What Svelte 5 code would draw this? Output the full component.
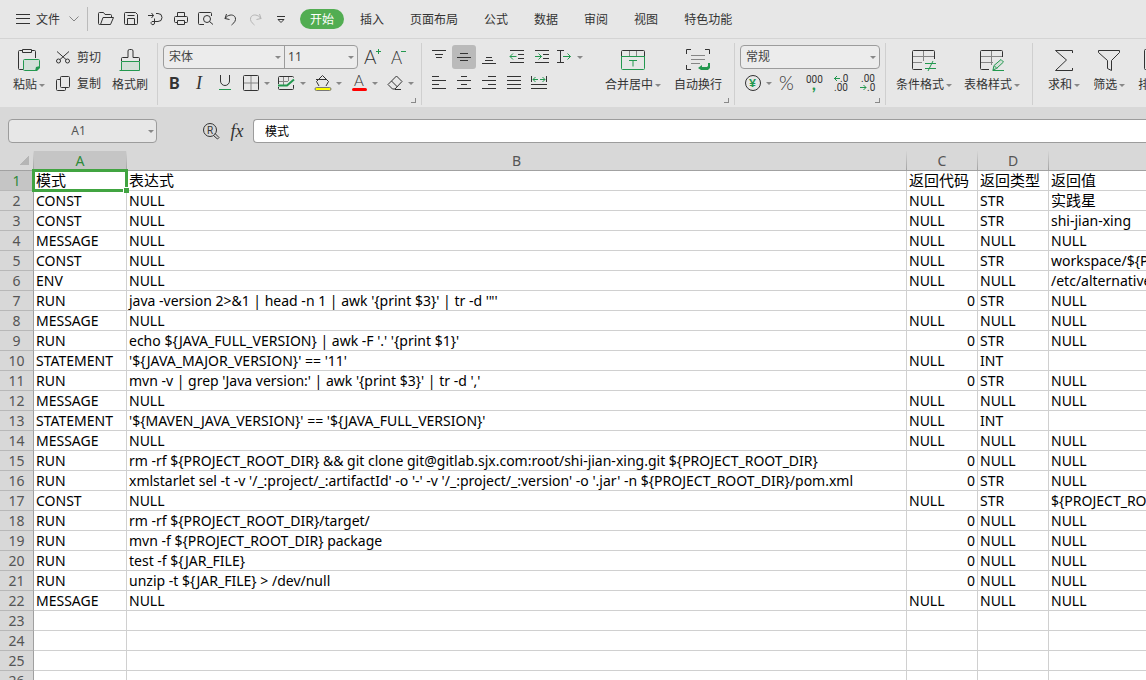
<script lang="ts">
  type Icon = { w: number; h: number; p?: string[][]; t?: any[][] };

  // p: [class, path], t: [class, x, y, size, text]
  const icons: Record<string, Icon> = {
    menu: { w: 14, h: 10, p: [['k', 'M0 .5h14M0 4.5h14M0 9.5h14']] },
    down: { w: 10, h: 6, p: [['s', 'M.5 .5L5 5l4.5-4.5']] },
    open: { w: 16, h: 14, p: [['k', 'M2.5 12.5h-1a1 1 0 0 1-1-1v-10a1 1 0 0 1 1-1h4l1.5 2h5.5a1 1 0 0 1 1 1v2M2.5 12.5h10l3-7H5z']] },
    save: { w: 14, h: 14, p: [['k', 'M1.5 .5h10l2 2v9a1 1 0 0 1-1 1h-11a1 1 0 0 1-1-1v-10a1 1 0 0 1 1-1M3.5 12.5v-6h7v6M3.5 3.5h7']] },
    output: { w: 15, h: 14, p: [['k', 'M0 3.5h5.5M3.5 1l2 2.5-2 2.5M8 1.5h2a4 4 0 0 1 0 8H4a1.7 1.7 0 1 0 2.5 1.5V6.5']] },
    print: { w: 14, h: 14, p: [['k', 'M3.5 4.5V.5h7v4M3.5 10.5h-2a1 1 0 0 1-1-1v-4a1 1 0 0 1 1-1h11a1 1 0 0 1 1 1v4a1 1 0 0 1-1 1h-2M3.5 8.5h7v4h-7z']] },
    preview: { w: 16, h: 14, p: [['k', 'M6 12.5H1.5a1 1 0 0 1-1-1v-10a1 1 0 0 1 1-1h11a1 1 0 0 1 1 1V4M12.5 7a3.5 3.5 0 1 1-7 0a3.5 3.5 0 0 1 7 0M11.5 9.5l3.5 3']] },
    undo: { w: 13, h: 13, p: [['k', 'M2.5 1L1 5.5l4.5 1M1 5.5C5 0 12 1.5 11.5 6.5c-.5 3-2.5 4-4 5.5']] },
    redo: { w: 13, h: 13, p: [['l', 'M10.5 1L12 5.5l-4.5 1M12 5.5C8 0 1 1.5 1.5 6.5c.5 3 2.5 4 4 5.5']] },
    more: { w: 8, h: 7, p: [['k', 'M0 .5h8M1 3.5h6L4 6.5z']] },
    paste: { w: 22, h: 22, p: [
      ['k', 'M4.5 1.5h-3a1 1 0 0 0-1 1v17a1 1 0 0 0 1 1H5M14 1.5h2.5a1 1 0 0 1 1 1V9M4.5 .5h9v3h-9z'],
      ['gt', 'M6.5 10.5h14a1 1 0 0 1 1 1v6l-4 4h-11a1 1 0 0 1-1-1v-9a1 1 0 0 1 1-1'],
      ['gf', 'M22 17v2l-3 3h-2l1-4z']] },
    cut: { w: 14, h: 13, p: [['k', 'M1 .5l9 8M13 .5l-9 8M4.5 10a2 2 0 1 1-4 0a2 2 0 0 1 4 0M13.5 10a2 2 0 1 1-4 0a2 2 0 0 1 4 0']] },
    copy: { w: 14, h: 15, p: [['k', 'M5.5 .5h7a1 1 0 0 1 1 1v9a1 1 0 0 1-1 1h-7a1 1 0 0 1-1-1v-9a1 1 0 0 1 1-1M4.5 3.5h-3a1 1 0 0 0-1 1v9a1 1 0 0 0 1 1h7a1 1 0 0 0 1-1v-2']] },
    brush: { w: 22, h: 22, p: [
      ['gt', 'M2.5 12.5h18v9h-18z'], ['g', 'M.5 21.5h3'],
      ['k', 'M2.5 12V9.5a1 1 0 0 1 1-1H9V2a1.5 1.5 0 0 1 1.5-1.5h2A1.5 1.5 0 0 1 14 2v6.5h5.5a1 1 0 0 1 1 1V12']] },
    grow: { w: 18, h: 16, t: [['kt', 0, 15, 19, 'A']], p: [['g', 'M14.5 0v5M12 2.5h5']] },
    shrink: { w: 16, h: 16, t: [['kt', 1, 15, 17, 'A']], p: [['g', 'M11 2.5h5']] },
    bold: { w: 12, h: 14, t: [['kt b', 0, 13, 16, 'B']] },
    italic: { w: 10, h: 14, t: [['kt i', 1, 13, 18, 'I']] },
    under: { w: 14, h: 16, p: [['k', 'M2.5 0v6a4.5 4.5 0 0 0 9 0V0'], ['g', 'M1 14.5h12']] },
    border: { w: 16, h: 16, p: [['s', 'M8 1v14M1 8h14'], ['k', 'M1.5 .5h13a1 1 0 0 1 1 1v13a1 1 0 0 1-1 1h-13a1 1 0 0 1-1-1v-13a1 1 0 0 1 1-1']] },
    draw: { w: 18, h: 16, p: [['s', 'M1 6.5h9M5.5 2v8M10.5 2v4'], ['k', 'M.5 9V2.5a1 1 0 0 1 1-1h13a1 1 0 0 1 1 1M.5 12v1.5a1 1 0 0 0 1 1h13a1 1 0 0 0 1-1V10'], ['g2', 'M0 10.5h9l7-6']] },
    fill: { w: 18, h: 16, p: [['k', 'M2 4.5h11M8.5 .5l6 6-2.5 4.5M8.5 .5L2.5 6.5 5 11'], ['yel', 'M2.5 12.5h13a1 1 0 0 1 0 3h-13a1 1 0 0 1 0-3z']] },
    color: { w: 16, h: 16, t: [['kt', 3, 11, 15, 'A']], p: [['red', 'M2.5 14.5h12']] },
    eraser: { w: 16, h: 16, p: [['k', 'M9.5 1l5.5 5.5-7 7.5H5.5L1 9.5zM4.5 6l6 6M8 14.5h6']] },
    atop: { w: 14, h: 14, p: [['k', 'M0 .5h14M3 4.5h8M4 7.5h6']] },
    amid: { w: 14, h: 14, p: [['k', 'M3 3.5h8M0 7.5h14M3 10.5h8']] },
    abot: { w: 14, h: 14, p: [['k', 'M4 7.5h6M3 10.5h8M0 13.5h14']] },
    dedent: { w: 14, h: 14, p: [['k', 'M0 .5h14M8 4.5h6M8 8.5h6M0 12.5h14'], ['g', 'M0 6.5h6.5M3 3.5l-3 3 3 3']] },
    indent: { w: 14, h: 14, p: [['k', 'M0 .5h14M8 4.5h6M8 8.5h6M0 12.5h14'], ['g', 'M0 6.5h6.5M3.5 3.5l3 3-3 3']] },
    orient: { w: 15, h: 14, p: [['k', 'M0 .5h7M3.5 .5v12M0 12.5h7'], ['g', 'M6 6.5h7.5M10.5 3.5l3 3-3 3']] },
    left: { w: 14, h: 14, p: [['k', 'M0 .5h7M0 4.5h14M0 8.5h7M0 12.5h14']] },
    center: { w: 14, h: 14, p: [['k', 'M4 .5h6M0 4.5h14M4 8.5h6M0 12.5h14']] },
    right: { w: 14, h: 14, p: [['k', 'M6 .5h8M0 4.5h14M6 8.5h8M0 12.5h14']] },
    justify: { w: 14, h: 14, p: [['k', 'M0 .5h14M0 4.5h14M0 8.5h14M0 12.5h14']] },
    spread: { w: 16, h: 14, p: [['k', 'M.5 0v6M15.5 0v6M0 8.5h16M0 12.5h16'], ['g', 'M2 3.5h5M9 3.5h5M4.5 1L2 3.5 4.5 6M11.5 1L14 3.5 11.5 6']] },
    merge: { w: 24, h: 20, p: [['s', 'M8.5 1v5M15.5 1v5'], ['g', 'M.5 6v12.5a1 1 0 0 0 1 1h21a1 1 0 0 0 1-1V6M.5 6.5h23M8 10.5h8M12 10.5v6'], ['k', 'M.5 6V1.5a1 1 0 0 1 1-1h21a1 1 0 0 1 1 1V6']] },
    wrap: { w: 24, h: 22, p: [['s', 'M5 6.5h14M5 10.5h14M5 14.5h9'], ['k', 'M.5 5V.5H5M19 .5h4.5V5M.5 16v4.5H5'], ['gf', 'M22 14h2v5l-2 2h-7l-3-2 4-3v2h5l1-1z']] },
    money: { w: 16, h: 16, p: [['k', 'M15.5 8a7.5 7.5 0 1 1-15 0a7.5 7.5 0 0 1 15 0']], t: [['gx b', 4, 12, 12, '¥']] },
    percent: { w: 16, h: 16, t: [['kt', 0, 15, 19, '%']] },
    comma: { w: 16, h: 17, t: [['kt m', 0, 8, 10, '000'], ['gx b', 6, 15, 16, ',']] },
    more0: { w: 16, h: 18, p: [['g', 'M1 4.5h6M4 2L1.5 4.5 4 7']], t: [['kt m', 7, 8, 10, '.0'], ['kt m', 1, 17, 10, '.00']] },
    less0: { w: 16, h: 18, p: [['g', 'M0 13.5h6M3.5 11L6 13.5 3.5 16']], t: [['kt m', 1, 8, 10, '.00'], ['kt m', 7, 17, 10, '.0']] },
    cond: { w: 24, h: 22, p: [['s', 'M1 7.5h21M11.5 2v10M1 13.5h9'], ['k', 'M22.5 10V2.5a1 1 0 0 0-1-1h-20a1 1 0 0 0-1 1v17a1 1 0 0 0 1 1H10'], ['g', 'M13 14.5h11M13 19.5h11M21 12l-5 10']] },
    style: { w: 24, h: 22, p: [['s', 'M1 7.5h21M11.5 2v14M1 13.5h12'], ['k', 'M22.5 8V2.5a1 1 0 0 0-1-1h-20a1 1 0 0 0-1 1v17a1 1 0 0 0 1 1H9'], ['gt', 'M13 21l1-4.5 7-6 2.5 2.5-7 6.5z'], ['g', 'M12.5 21.5H24M14.5 17l2.5 2.5']] },
    sum: { w: 18, h: 22, p: [['k', 'M17.5 4V1.5H.5l11 9.5L.5 21.5h17V19']] },
    filter: { w: 22, h: 22, p: [['k', 'M.5 1.5h21v2l-8 8v10l-4-2v-8l-9-8z']] },
    sort: { w: 20, h: 22, p: [['k', 'M9 .5H1.5a1 1 0 0 0-1 1v18a1 1 0 0 0 1 1H9z']] },
    search: { w: 17, h: 17, p: [['k', 'M13.5 7a6.5 6.5 0 1 1-13 0a6.5 6.5 0 0 1 13 0M10.5 12.5l4 3.5 1.5-1.5-4-4']], t: [['kt m', 4, 11, 10, 'R']] }
  };

  const quick = [
    ['open', '打开'], ['save', '保存'], ['output', '输出'], ['print', '打印'],
    ['preview', '打印预览'], ['undo', '撤销'], ['redo', '恢复'], ['more', '自定义']
  ];
  const tabs = ['开始', '插入', '页面布局', '公式', '数据', '审阅', '视图', '特色功能'];
  let activeTab = $state('开始');
  let formula = $state('模式');

  const columns = ['A', 'B', 'C', 'D', 'E'];
  const rows = [
    ['模式', '表达式', '返回代码', '返回类型', '返回值'],
    ['CONST', 'NULL', 'NULL', 'STR', '实践星'],
    ['CONST', 'NULL', 'NULL', 'STR', 'shi-jian-xing'],
    ['MESSAGE', 'NULL', 'NULL', 'NULL', 'NULL'],
    ['CONST', 'NULL', 'NULL', 'STR', 'workspace/${PROJECT_NAME}'],
    ['ENV', 'NULL', 'NULL', 'NULL', '/etc/alternatives'],
    ['RUN', `java -version 2>&1 | head -n 1 | awk '{print $3}' | tr -d '"'`, 0, 'STR', 'NULL'],
    ['MESSAGE', 'NULL', 'NULL', 'NULL', 'NULL'],
    ['RUN', "echo ${JAVA_FULL_VERSION} | awk -F '.' '{print $1}'", 0, 'STR', 'NULL'],
    ['STATEMENT', "'${JAVA_MAJOR_VERSION}' == '11'", 'NULL', 'INT', ''],
    ['RUN', "mvn -v | grep 'Java version:' | awk '{print $3}' | tr -d ','", 0, 'STR', 'NULL'],
    ['MESSAGE', 'NULL', 'NULL', 'NULL', 'NULL'],
    ['STATEMENT', "'${MAVEN_JAVA_VERSION}' == '${JAVA_FULL_VERSION}'", 'NULL', 'INT', ''],
    ['MESSAGE', 'NULL', 'NULL', 'NULL', 'NULL'],
    ['RUN', 'rm -rf ${PROJECT_ROOT_DIR} && git clone git@gitlab.sjx.com:root/shi-jian-xing.git ${PROJECT_ROOT_DIR}', 0, 'NULL', 'NULL'],
    ['RUN', "xmlstarlet sel -t -v '/_:project/_:artifactId' -o '-' -v '/_:project/_:version' -o '.jar' -n ${PROJECT_ROOT_DIR}/pom.xml", 0, 'STR', 'NULL'],
    ['CONST', 'NULL', 'NULL', 'STR', '${PROJECT_ROOT_DIR}'],
    ['RUN', 'rm -rf ${PROJECT_ROOT_DIR}/target/', 0, 'NULL', 'NULL'],
    ['RUN', 'mvn -f ${PROJECT_ROOT_DIR} package', 0, 'NULL', 'NULL'],
    ['RUN', 'test -f ${JAR_FILE}', 0, 'NULL', 'NULL'],
    ['RUN', 'unzip -t ${JAR_FILE} > /dev/null', 0, 'NULL', 'NULL'],
    ['MESSAGE', 'NULL', 'NULL', 'NULL', 'NULL'],
    ...Array.from({ length: 8 }, () => ['', '', '', '', ''])
  ];

  const isChinese = (cell: string | number) => /[\u4e00-\u9fff]/.test(String(cell));
</script>

{#snippet icon(name: string)}
  {@const ic = icons[name]}
  <svg width={ic.w} height={ic.h} viewBox="0 0 {ic.w} {ic.h}" aria-hidden="true">
    {#each ic.p ?? [] as [cls, d]}
      <path class={cls} {d} />
    {/each}
    {#each ic.t ?? [] as [cls, x, y, size, text]}
      <text class={cls} {x} {y} font-size={size}>{text}</text>
    {/each}
  </svg>
{/snippet}

{#snippet tool(name: string, title: string, on = false)}
  <button class="tool" class:on aria-label={title}>{@render icon(name)}</button>
{/snippet}

{#snippet drop(name: string, title: string)}
  <button class="drop" aria-label={title}>
    <span class="pic">{@render icon(name)}</span><i class="caret"></i>
  </button>
{/snippet}

{#snippet large(name: string, label: string, caret = true)}
  <button class="large">
    <span class="big">{@render icon(name)}</span>
    <span class="label">{label}{#if caret}<i class="caret"></i>{/if}</span>
  </button>
{/snippet}

<div class="app">
  <header class="menubar">
    <button class="file">{@render icon('menu')}<span>文件</span>{@render icon('down')}</button>
    <div class="quick">
      {#each quick as [name, title]}
        <button aria-label={title}>{@render icon(name)}</button>
      {/each}
    </div>
    <nav class="tabs">
      {#each tabs as tab}
        <button class:active={activeTab === tab} onclick={() => (activeTab = tab)}>{tab}</button>
      {/each}
    </nav>
  </header>

  <div class="ribbon">
    <section class="group clipboard">
      {@render large('paste', '粘贴')}
      <div class="stack">
        <button class="text-tool">{@render icon('cut')}<span>剪切</span></button>
        <button class="text-tool">{@render icon('copy')}<span>复制</span></button>
      </div>
      {@render large('brush', '格式刷', false)}
    </section>

    <section class="group font corner">
      <div class="stack">
        <div class="line">
          <div class="combo">
            <label class="pick"><select aria-label="字体"><option>宋体</option></select><i class="caret"></i></label>
            <label class="pick size"><select aria-label="字号"><option>11</option></select><i class="caret"></i></label>
          </div>
          {@render tool('grow', '增大字号')}
          {@render tool('shrink', '减小字号')}
        </div>
        <div class="line">
          {@render tool('bold', '加粗')}
          {@render tool('italic', '倾斜')}
          {@render tool('under', '下划线')}
          <div class="drops">
            {@render drop('border', '边框')}
            {@render drop('draw', '绘图边框')}
            {@render drop('fill', '填充颜色')}
            {@render drop('color', '字体颜色')}
            {@render drop('eraser', '清除')}
          </div>
        </div>
      </div>
    </section>

    <section class="group align corner">
      <div class="stack">
        <div class="line">
          {@render tool('atop', '顶端对齐')}
          {@render tool('amid', '垂直居中', true)}
          {@render tool('abot', '底端对齐')}
          <div class="line indents">
            {@render tool('dedent', '减少缩进')}
            {@render tool('indent', '增加缩进')}
            {@render drop('orient', '文字方向')}
          </div>
        </div>
        <div class="line">
          {@render tool('left', '左对齐')}
          {@render tool('center', '居中')}
          {@render tool('right', '右对齐')}
          {@render tool('justify', '两端对齐')}
          {@render tool('spread', '分散对齐')}
        </div>
      </div>
      <div class="larges">
        {@render large('merge', '合并居中')}
        {@render large('wrap', '自动换行', false)}
      </div>
    </section>

    <section class="group number corner">
      <div class="stack">
        <div class="combo">
          <label class="pick"><select aria-label="数字格式"><option>常规</option></select><i class="caret"></i></label>
        </div>
        <div class="line formats">
          {@render drop('money', '货币')}
          {@render tool('percent', '百分比')}
          {@render tool('comma', '千位分隔')}
          {@render tool('more0', '增加小数位')}
          {@render tool('less0', '减少小数位')}
        </div>
      </div>
    </section>

    <section class="group styles">
      {@render large('cond', '条件格式')}
      {@render large('style', '表格样式')}
    </section>

    <section class="group edit">
      {@render large('sum', '求和')}
      {@render large('filter', '筛选')}
      {@render large('sort', '排序')}
    </section>
  </div>

  <div class="formula-bar">
    <label class="cell-name"><input value="A1" aria-label="名称框" /><i class="caret"></i></label>
    <button class="find" aria-label="查找">{@render icon('search')}</button>
    <button class="fx" aria-label="插入函数">fx</button>
    <input class="formula" aria-label="编辑栏" bind:value={formula} />
  </div>

  <main class="sheet">
    <table>
      <colgroup>
        <col class="c-num" /><col class="c-a" /><col class="c-b" /><col class="c-c" /><col class="c-d" /><col />
      </colgroup>
      <thead>
        <tr>
          <th class="all"></th>
          {#each columns as col, i}
            <th class:picked={i === 0}>{col}</th>
          {/each}
        </tr>
      </thead>
      <tbody>
        {#each rows as row, r}
          <tr>
            <th class:picked={r === 0}>{r + 1}</th>
            {#each row as cell, c}
              <td class:zh={isChinese(cell)} class:num={cell === 0} class:current={r === 0 && c === 0}>{cell}</td>
            {/each}
          </tr>
        {/each}
      </tbody>
    </table>
  </main>
</div>

<style>
  :global(body) {
    margin: 0;
    overflow: hidden;
  }

  .app {
    display: flex;
    flex-direction: column;
    height: 100vh;
    overflow: hidden;
    background: #d8d8d8;
    color: #333;
    font: 12px/16px "Noto Sans", "Noto Sans CJK SC", sans-serif;
  }

  button, select, input {
    margin: 0;
    padding: 0;
    border: 0;
    background: none;
    color: inherit;
    font: inherit;
    box-sizing: border-box;
    white-space: nowrap;
  }

  svg {
    display: block;
    flex: none;
    fill: none;
    overflow: visible;
  }

  .k { stroke: #333; }
  .s { stroke: #858585; }
  .l { stroke: #b4b4b4; }
  .g { stroke: #23984f; }
  .g2 { stroke: #23984f; stroke-width: 2; }
  .gt { stroke: #23984f; fill: #d3e0d8; }
  .gf { fill: #23984f; }
  .red { stroke: #f00; stroke-width: 3; stroke-linecap: round; }
  .yel { stroke: #777; fill: #ff0; }
  .kt { fill: #333; font-family: Lato, sans-serif; font-weight: 300; }
  .gx { fill: #23984f; font-family: Lato, sans-serif; }
  .b { font-weight: 900; }
  .i { font-family: "Liberation Serif", serif; font-style: italic; }
  .m { font-family: Roboto, sans-serif; font-weight: 400; }

  .caret {
    flex: none;
    border: 3px solid transparent;
    border-top-color: #888;
    border-bottom: 0;
  }

  .menubar {
    display: flex;
    align-items: center;
    height: 38px;
    flex: none;
    background: #e7e7e7;
    border-bottom: 1px solid #d4d4d4;
  }

  .file {
    display: flex;
    align-items: center;
    height: 24px;
    padding: 0 8px 0 16px;
    border-right: 1px solid #bbb;
  }

  .file span {
    margin: 0 9px 0 6px;
    padding-top: 1px;
  }

  .quick {
    display: flex;
    margin-left: 5px;
  }

  .quick button {
    display: flex;
    align-items: center;
    justify-content: center;
    width: 25px;
    height: 24px;
  }

  .tabs {
    display: flex;
    gap: 6px;
    margin-left: 7px;
  }

  .tabs button {
    height: 20px;
    padding: 1px 10px 0;
    border-radius: 10px;
  }

  .tabs .active {
    background: #52ad52;
    color: #fff;
  }

  .ribbon {
    display: flex;
    flex: none;
    height: 62px;
    padding: 4px 0 2px;
    background: #e7e7e7;
  }

  .group {
    position: relative;
    display: flex;
    flex: none;
    padding-top: 2px;
    border-right: 1px solid #cfcfcf;
  }

  .corner::after {
    content: "";
    position: absolute;
    right: 5px;
    bottom: 2px;
    width: 4px;
    height: 4px;
    border: solid #888;
    border-width: 0 1px 1px 0;
  }

  .clipboard { gap: 11px; padding-left: 13px; padding-right: 9px; }
  .font { padding-left: 5px; padding-right: 7px; }
  .align { padding-left: 5px; padding-right: 12px; }
  .number { padding-left: 5px; padding-right: 5px; }
  .styles { gap: 12px; padding-left: 10px; padding-right: 12px; }
  .edit { gap: 13px; padding-left: 15px; border: 0; }

  .stack {
    display: flex;
    flex-direction: column;
    gap: 2px;
  }

  .line {
    display: flex;
    gap: 1px;
    height: 24px;
  }

  .indents {
    margin-left: 3px;
  }

  .tool, .text-tool {
    display: flex;
    align-items: center;
    justify-content: center;
    width: 24px;
    height: 24px;
  }

  .text-tool {
    width: auto;
    gap: 7px;
  }

  .text-tool span {
    padding-top: 1px;
  }

  .on {
    border-radius: 3px;
    background: #bababa;
  }

  .drops {
    display: flex;
    gap: 8px;
    margin-left: 4px;
  }

  .drop {
    display: flex;
    align-items: center;
    justify-content: space-between;
    width: 28px;
    height: 24px;
  }

  .pic {
    display: flex;
    justify-content: center;
    width: 18px;
  }

  .formats {
    gap: 3px;
    margin-left: 4px;
  }

  .large {
    display: flex;
    flex-direction: column;
    align-items: center;
    gap: 5px;
    height: 50px;
    padding-top: 3px;
  }

  .big {
    display: flex;
    align-items: center;
    height: 24px;
  }

  .label {
    display: flex;
    align-items: center;
    gap: 2px;
  }

  .larges {
    display: flex;
    gap: 13px;
    margin-left: 22px;
  }

  .combo {
    display: flex;
    box-sizing: border-box;
    height: 24px;
    border: 1px solid #9c9c9c;
    border-radius: 4px;
    background: #ececec;
  }

  .font .combo {
    width: 195px;
    margin-right: 2px;
  }

  .pick {
    display: flex;
    flex: 1;
    align-items: center;
    padding-right: 3px;
  }

  .size {
    flex: 0 0 69px;
    border-left: 1px solid #9c9c9c;
  }

  .pick select {
    flex: 1;
    min-width: 0;
    height: 22px;
    padding-left: 5px;
    appearance: none;
    outline: 0;
    color: #444;
  }

  .size select {
    padding-left: 3px;
  }

  .number .combo {
    width: 140px;
  }

  .formula-bar {
    display: flex;
    align-items: center;
    flex: none;
    box-sizing: border-box;
    height: 44px;
    padding: 4px 0 0 8px;
  }

  .cell-name {
    display: flex;
    align-items: center;
    box-sizing: border-box;
    width: 149px;
    height: 24px;
    padding-right: 2px;
    border: 1px solid #9c9c9c;
    border-radius: 4px;
    background: #e7e7e7;
  }

  .cell-name input {
    flex: 1;
    min-width: 0;
    color: #555;
    text-align: center;
  }

  .find {
    margin-left: 46px;
  }

  .fx {
    width: 16px;
    margin: 0 8px 0 9px;
    font: italic 18px/20px "Liberation Serif", serif;
  }

  .formula {
    flex: 1;
    min-width: 0;
    height: 24px;
    padding-left: 11px;
    border: 1px solid #9c9c9c;
    border-right: 0;
    border-radius: 4px 0 0 4px;
    background: #fff;
    color: #000;
  }

  .sheet {
    flex: 1;
    min-height: 0;
    overflow: hidden;
    background: #fff;
  }

  table {
    width: 1549px;
    table-layout: fixed;
    border-collapse: separate;
    border-spacing: 0;
    color: #000;
    font-size: 14px;
    line-height: 19px;
  }

  .c-num { width: 34px; }
  .c-a { width: 93px; }
  .c-b { width: 780px; }
  .c-c { width: 71px; }
  .c-d { width: 71px; }

  th, td {
    box-sizing: border-box;
    height: 20px;
    padding: 0 2px;
    overflow: hidden;
    border-right: 1px solid #d0d0d0;
    border-bottom: 1px solid #d0d0d0;
    text-align: left;
    white-space: nowrap;
  }

  th {
    padding: 0;
    background: #d8d8d8;
    color: #555;
    font-weight: 400;
    text-align: center;
  }

  thead th {
    border-right: 1px solid;
    border-bottom-color: #a0a0a0;
    border-image: linear-gradient(#d8d8d8, #a0a0a0) 1;
  }

  tbody th {
    border-right-color: #a0a0a0;
    border-bottom-color: #b8b8b8;
  }

  th.picked {
    background: #c5c5c5;
    color: #2f8a3a;
  }

  th.all {
    background: linear-gradient(135deg, transparent 50%, #b5b5b5 50%) 20px 5px / 9px 9px no-repeat #d8d8d8;
  }

  .zh {
    font-size: 15px;
  }

  .num {
    text-align: right;
  }

  .current {
    position: relative;
    overflow: visible;
  }

  .current::before {
    content: "";
    position: absolute;
    inset: -2px;
    border: 3px solid #41a441;
  }

  .current::after {
    content: "";
    position: absolute;
    right: -3px;
    bottom: -3px;
    width: 5px;
    height: 5px;
    border: solid #fff;
    border-width: 1px 0 0 1px;
    background: #41a441;
  }
</style>
